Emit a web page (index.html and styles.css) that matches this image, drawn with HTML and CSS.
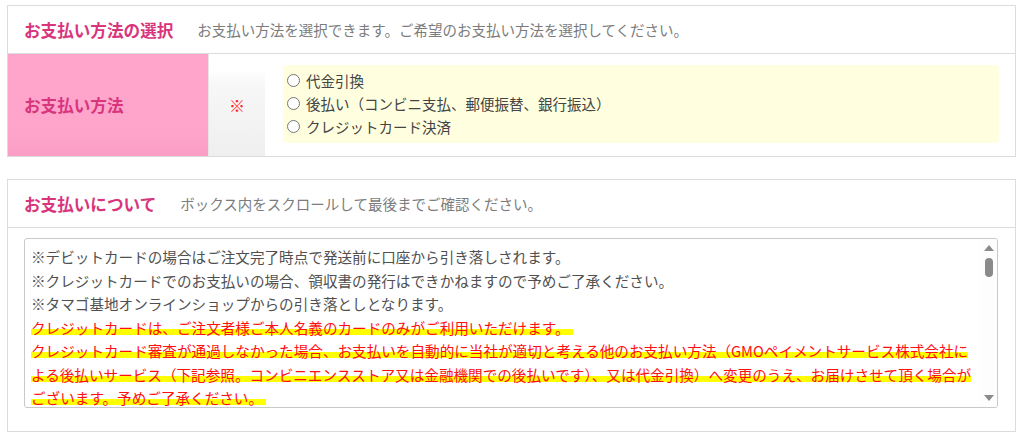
FILE: index.html
```html
<!DOCTYPE html>
<html lang="ja">
<head>
<meta charset="utf-8">
<link rel="stylesheet" href="styles.css">
</head>
<body>
<section class="section">
  <div class="section-head">
    <h2 class="title">お支払い方法の選択</h2>
    <p class="desc">お支払い方法を選択できます。ご希望のお支払い方法を選択してください。</p>
  </div>
  <div class="row">
    <div class="label">お支払い方法</div>
    <div class="req">※</div>
    <div class="content">
      <div class="options">
        <label class="option"><span class="radio"></span>代金引換</label>
        <label class="option"><span class="radio"></span>後払い（コンビニ支払、郵便振替、銀行振込）</label>
        <label class="option"><span class="radio"></span>クレジットカード決済</label>
      </div>
    </div>
  </div>
</section>

<section class="section section-2">
  <div class="section-head">
    <h2 class="title">お支払いについて</h2>
    <p class="desc">ボックス内をスクロールして最後までご確認ください。</p>
  </div>
  <div class="notice-wrap">
    <div class="notice">
      <div class="notice-text">
        <div>※デビットカードの場合はご注文完了時点で発送前に口座から引き落しされます。</div>
        <div>※クレジットカードでのお支払いの場合、領収書の発行はできかねますので予めご了承ください。</div>
        <div>※タマゴ基地オンラインショップからの引き落としとなります。</div>
        <div class="red"><span class="mark">クレジットカードは、ご注文者様ご本人名義のカードのみがご利用いただけます。&nbsp;</span></div>
        <div class="red"><span class="mark">クレジットカード審査が通過しなかった場合、お支払いを自動的に当社が適切と考える他のお支払い方法（GMOペイメントサービス株式会社に</span></div>
        <div class="red"><span class="mark">よる後払いサービス（下記参照。コンビニエンスストア又は金融機関での後払いです）、又は代金引換）へ変更のうえ、お届けさせて頂く場合が</span></div>
        <div class="red"><span class="mark">ございます。予めご了承ください。&nbsp;</span></div>
      </div>
      <div class="scrollbar">
        <span class="arrow-up"></span>
        <span class="thumb"></span>
        <span class="track"></span>
        <span class="arrow-down"></span>
      </div>
    </div>
  </div>
</section>
</body>
</html>
```
FILE: styles.css
```css
* { box-sizing: border-box; }
html, body { background: #fff; }
body {
  margin: 0;
  padding: 5px 8px 0 7px;
  font-family: "Noto Sans CJK JP", "Noto Sans", sans-serif;
  color: #555;
}
.section {
  border: 1px solid #dcdcdc;
}
.section-2 { margin-top: 22px; }
.section-head {
  height: 48px;
  display: flex;
  align-items: center;
  gap: 24px;
  padding-left: 16px;
  border-bottom: 1px solid #dcdcdc;
}
.title {
  margin: 0;
  font-size: 16.6px;
  font-weight: bold;
  color: #d8357c;
}
.desc {
  margin: 0;
  font-size: 14.5px;
  color: #7c7c7c;
}
.row {
  display: flex;
  height: 102px;
}
.label {
  width: 201px;
  background: linear-gradient(#ffa5cc 70%, #fb9ec6);
  border-right: 1px solid #e6e6e6;
  display: flex;
  align-items: center;
  padding-left: 16px;
  font-size: 16.6px;
  font-weight: bold;
  color: #d8357c;
}
.req {
  width: 56px;
  background: linear-gradient(#fff 15%, #f7f7f7 30%, #efefef);
  display: flex;
  align-items: center;
  justify-content: center;
  color: #f22;
  font-size: 16px;
}
.content {
  flex: 1;
  padding: 11px 16px 12px 18px;
}
.options {
  height: 78px;
  background: #ffffdf;
  border-radius: 4px;
  padding: 4px 0 0 4px;
  display: flex;
  flex-direction: column;
}
.option {
  height: 23px;
  display: flex;
  align-items: center;
  gap: 6px;
  font-size: 14.5px;
  color: #444;
}
.radio {
  width: 13px;
  height: 13px;
  border: 1px solid #777;
  border-radius: 50%;
  background: #fff;
}
.notice-wrap {
  padding: 10px 17px 23px 16px;
}
.notice {
  height: 170px;
  display: flex;
  border: 1px solid #c9c9c9;
  border-radius: 3px;
  overflow: hidden;
}
.notice-text {
  flex: 1;
  padding: 6px 0 0 6px;
  font-size: 14.6px;
  line-height: 23.5px;
  white-space: nowrap;
  overflow: hidden;
  color: #505050;
}
.red { color: #ff1010; }
.mark {
  background: linear-gradient(transparent 58%, #ffff00 58%, #ffff00 86%, transparent 86%);
}
.scrollbar {
  width: 17px;
  display: flex;
  flex-direction: column;
  align-items: center;
  padding: 6px 0 6px;
  background: #fdfdfd;
}
.arrow-up, .arrow-down {
  width: 0;
  height: 0;
  border-left: 5px solid transparent;
  border-right: 5px solid transparent;
}
.arrow-up { border-bottom: 6px solid #8a8a8a; }
.arrow-down { border-top: 6px solid #8a8a8a; }
.thumb {
  margin-top: 7px;
  width: 8px;
  height: 19px;
  border-radius: 4px;
  background: #8a8a8a;
}
.track { flex: 1; }
```
